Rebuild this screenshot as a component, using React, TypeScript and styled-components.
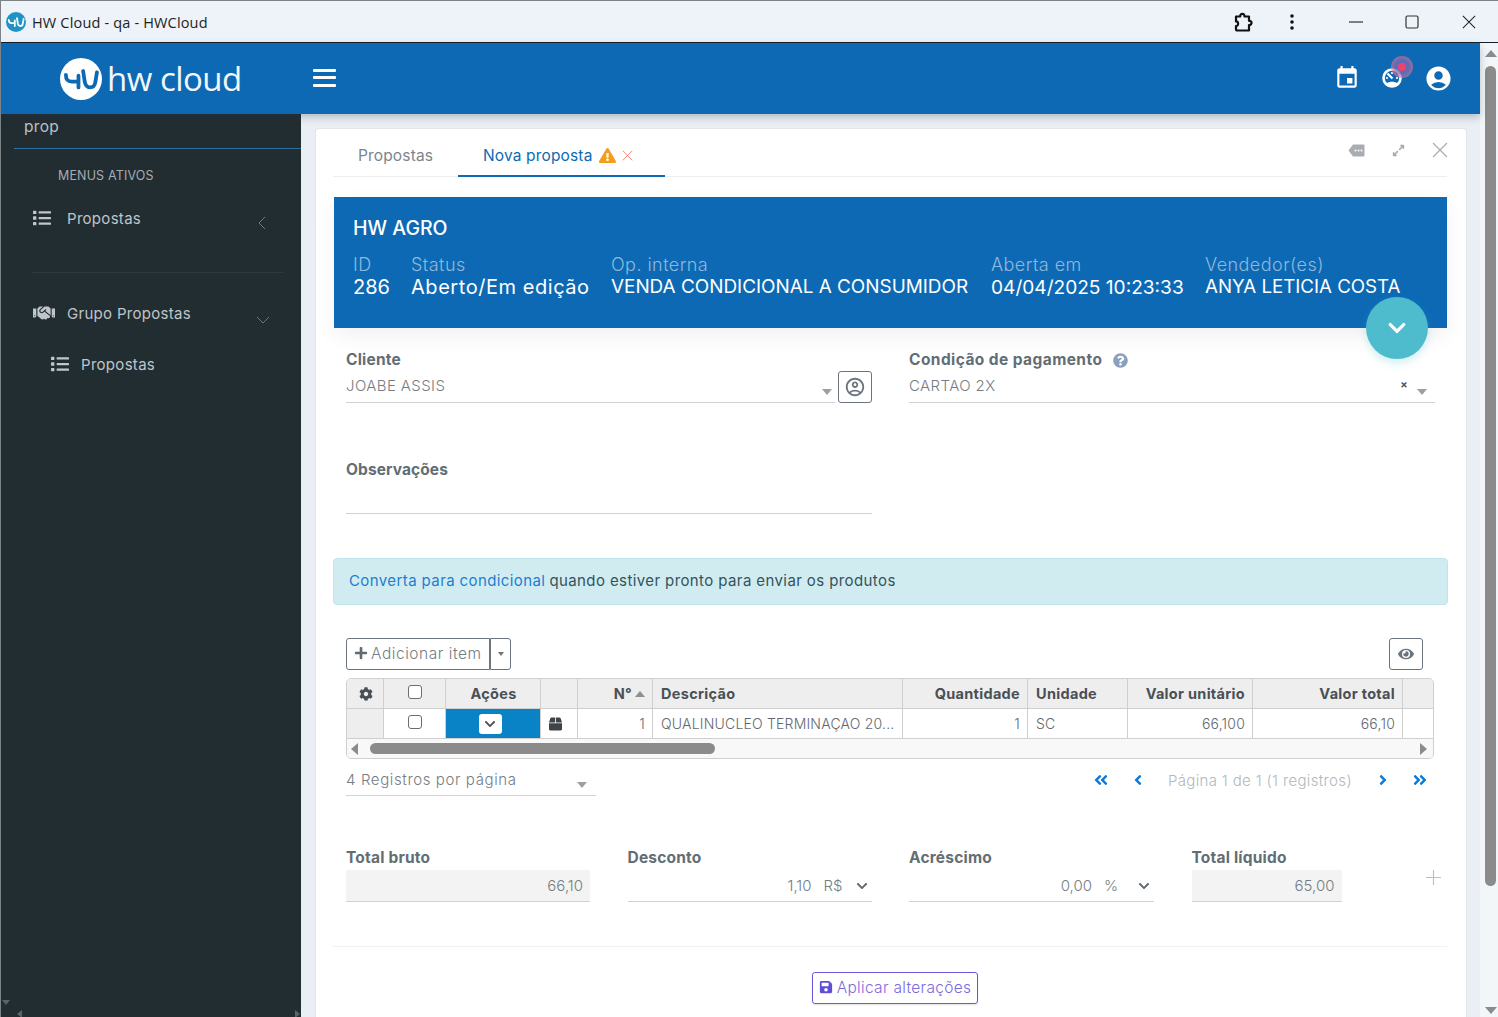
import React from 'react';
import styled, { createGlobalStyle } from 'styled-components';
import {
  FaAngleDoubleLeft,
  FaAngleDoubleRight,
  FaAngleLeft,
  FaAngleRight,
  FaBox,
  FaChevronDown,
  FaCog,
  FaExclamationTriangle,
  FaExpandAlt,
  FaEye,
  FaHandshake,
  FaList,
  FaPlus,
  FaQuestionCircle,
  FaSave,
} from 'react-icons/fa';
import { MdAccountCircle, MdOutlineAccountCircle, MdEvent } from 'react-icons/md';

const FONT = `Inter, "Open Sans", sans-serif`;

const GlobalStyle = createGlobalStyle`
  * { box-sizing: border-box; }
  html, body { margin: 0; padding: 0; height: 100%; overflow: hidden; }
  #root { height: 100%; }
  body { font-family: ${FONT}; color: #6c757d; background: #e9eff4; }
`;

const Window = styled.div`
  display: flex;
  flex-direction: column;
  height: 1017px;
  width: 1498px;
  border-left: 1px solid #7d8288;
  overflow: hidden;
  position: relative;
`;

const TitleBar = styled.div`
  display: flex;
  align-items: center;
  height: 43px;
  flex: none;
  background: #edf3f8;
  border-top: 1px solid #7d8288;
  border-bottom: 1px solid #14202b;
  padding-left: 5px;
  font-family: 'Open Sans', sans-serif;
  font-size: 14.5px;
  letter-spacing: 0.17px;
  color: #1d1d1d;
`;

const TitleText = styled.span`
  margin-left: 6px;
  flex: 1;
  margin-top: 2px;
`;

const TitleActions = styled.div`
  display: flex;
  align-items: center;
  color: #111;
`;

const TitleButton = styled.div<{ $w: number }>`
  width: ${(p) => p.$w}px;
  display: flex;
  justify-content: center;
  align-items: center;
`;

const Below = styled.div`
  display: flex;
  flex: 1;
  min-height: 0;
`;

const Main = styled.div`
  display: flex;
  flex-direction: column;
  flex: 1;
  min-width: 0;
`;

const PageScroll = styled.div`
  width: 18px;
  flex: none;
  background: #f3f6f9;
  display: flex;
  flex-direction: column;
  align-items: center;
  padding: 7px 0 0 3px;
`;

const ScrollThumb = styled.div`
  width: 11px;
  height: 820px;
  margin-top: 9px;
  margin-bottom: 121px;
  border-radius: 6px;
  background: #8b8b8b;
`;

const Tri = styled.div<{ $dir: 'up' | 'down' | 'left' | 'right'; $size?: number; $color?: string }>`
  flex: none;
  width: 0;
  height: 0;
  border-style: solid;
  border-color: transparent;
  ${({ $dir, $size = 5, $color = '#8b8b8b' }) => {
    if ($dir === 'up') return `border-width: 0 ${$size + 1}px ${$size + 2}px; border-bottom-color: ${$color};`;
    if ($dir === 'down') return `border-width: ${$size + 2}px ${$size + 1}px 0; border-top-color: ${$color};`;
    if ($dir === 'left') return `border-width: ${$size + 1}px ${$size + 2}px ${$size + 1}px 0; border-right-color: ${$color};`;
    return `border-width: ${$size + 1}px 0 ${$size + 1}px ${$size + 2}px; border-left-color: ${$color};`;
  }}
`;

const Header = styled.header`
  display: flex;
  align-items: center;
  height: 71px;
  flex: none;
  background: #0d69b4;
  position: relative;
  z-index: 3;
  box-shadow: 0 3px 8px rgba(40, 50, 60, 0.28);
`;

const LogoBlock = styled.div`
  width: 300px;
  padding-left: 59px;
  display: flex;
  align-items: center;
  gap: 5px;
  color: #fff;
`;

const LogoText = styled.span`
  font-family: 'Open Sans', sans-serif;
  font-weight: 400;
  font-size: 33px;
  letter-spacing: -0.5px;
  line-height: 1;
  margin-top: -1px;
  opacity: 0.95;
`;

const MenuBars = styled.div`
  display: flex;
  flex-direction: column;
  gap: 4.5px;
  margin: -2px 0 0 12px;
  width: 23px;
  & > i {
    display: block;
    height: 3px;
    background: #fff;
    border-radius: 1px;
  }
`;

const HeaderIcons = styled.div`
  margin: -1px 27px 0 auto;
  display: flex;
  align-items: center;
  gap: 19px;
  color: #fff;
`;

const GaugeWrap = styled.div`
  position: relative;
  width: 26px;
  height: 26px;
  display: flex;
  align-items: center;
  justify-content: center;
`;

const Pulse = styled.span`
  position: absolute;
  right: -8px;
  top: -9px;
  width: 22px;
  height: 22px;
  border-radius: 50%;
  background: radial-gradient(circle, rgba(120, 110, 180, 0.75) 0 45%, rgba(226, 110, 150, 0.6) 62% 100%);
  display: flex;
  align-items: center;
  justify-content: center;
  &::after {
    content: '';
    width: 8px;
    height: 8px;
    border-radius: 50%;
    background: #f0406c;
  }
`;

const Columns = styled.div`
  display: flex;
  flex: 1;
  min-height: 0;
`;

const Sidebar = styled.aside`
  width: 300px;
  flex: none;
  background: #222d32;
  color: #c2c7ca;
  position: relative;
  font-size: 15px;
  letter-spacing: 0.3px;
`;

const SearchBox = styled.div`
  margin-left: 13px;
  height: 35px;
  padding: 2px 0 0 10px;
  line-height: 22px;
  font-size: 15.5px;
  border-bottom: 1px solid #2f6f9f;
  color: #bcc2c5;
`;

const SectionLabel = styled.div`
  margin: 19px 0 0 57px;
  font-size: 12.5px;
  line-height: 16px;
  color: #a4acb0;
  letter-spacing: 0.15px;
`;

const MenuRow = styled.div<{ $indent?: number; $top: number }>`
  display: flex;
  align-items: center;
  height: 20px;
  margin-top: ${(p) => p.$top}px;
  padding-left: ${(p) => p.$indent ?? 32}px;
  color: #bfc5c8;
`;

const MenuLabel = styled.span<{ $left: number }>`
  margin-left: ${(p) => p.$left}px;
  flex: 1;
`;

const MenuArrow = styled.span<{ $right: number; $down?: number }>`
  margin-right: ${(p) => p.$right}px;
  display: flex;
  position: relative;
  top: ${(p) => p.$down ?? 0}px;
`;

const MenuDivider = styled.div`
  height: 1px;
  margin: 44px 18px 0 31px;
  background: #2e3a40;
`;

const SideScrollDown = styled.div`
  position: absolute;
  left: 1px;
  bottom: 12px;
`;

const SideScrollLeft = styled.div`
  position: absolute;
  left: 16px;
  bottom: -1px;
`;

const SideScrollRight = styled.div`
  position: absolute;
  right: 1px;
  bottom: -1px;
`;

const Content = styled.main`
  flex: 1;
  min-width: 0;
  padding: 14px 13px 0 14px;
  background: #e9eff4;
`;

const Card = styled.div`
  height: 100%;
  background: #fff;
  border: 1px solid #e2e6ea;
  border-bottom: 0;
  border-radius: 4px 4px 0 0;
  padding: 0 19px 0 17px;
  position: relative;
`;

const TabBar = styled.div`
  display: flex;
  align-items: flex-end;
  height: 48px;
  border-bottom: 1px solid #eceff1;
  font-size: 15.5px;
  letter-spacing: 0.15px;
`;

const Tab = styled.div<{ $active?: boolean; $w: number }>`
  width: ${(p) => p.$w}px;
  height: 100%;
  display: flex;
  align-items: center;
  padding: 6px 0 0 25px;
  gap: 6px;
  color: ${(p) => (p.$active ? '#0d6ab5' : '#7b858c')};
  border-bottom: 2px solid ${(p) => (p.$active ? '#0d6ab5' : 'transparent')};
  margin-bottom: -1px;
`;

const CardTools = styled.div`
  margin-left: auto;
  align-self: flex-start;
  display: flex;
  align-items: center;
  gap: 27px;
  height: 42px;
  margin-right: -1px;
  color: #a9adb1;
`;

const Banner = styled.section`
  margin: 20px 0 0 1px;
  height: 131px;
  background: #0d69b4;
  padding: 19px 0 0 19px;
  color: #fff;
  box-shadow: 0 8px 20px rgba(0, 0, 0, 0.06);
`;

const BannerTitle = styled.div`
  font-size: 19.5px;
  line-height: 24px;
  font-weight: 500;
`;

const BannerGrid = styled.div`
  display: grid;
  grid-template-columns: 58px 200px 380px 214px 1fr;
  margin-top: 13px;
`;

const BannerLabel = styled.div`
  font-size: 18px;
  line-height: 24px;
  letter-spacing: 0.45px;
  color: #8db9dd;
  font-weight: 300;
`;

const BannerValue = styled.div<{ $size?: number; $ls?: number }>`
  font-size: ${(p) => p.$size ?? 18.9}px;
  line-height: 24px;
  margin-top: -2px;
  font-weight: 400;
  white-space: nowrap;
  letter-spacing: ${(p) => p.$ls ?? 0}px;
`;

const Fab = styled.div`
  position: absolute;
  left: 1050px;
  top: 168px;
  width: 62px;
  height: 62px;
  border-radius: 50%;
  background: #4ebccd;
  color: #fff;
  display: flex;
  align-items: center;
  justify-content: center;
  box-shadow: 0 4px 8px rgba(78, 188, 205, 0.25);
`;

const Form = styled.div`
  padding: 0 13px 0 13px;
`;

const TwoCols = styled.div`
  display: grid;
  grid-template-columns: 526px 526px;
  gap: 37px;
`;

const FieldLabel = styled.div<{ $ls?: number }>`
  display: flex;
  align-items: center;
  gap: 11px;
  font-size: 15.5px;
  line-height: 20px;
  font-weight: 700;
  letter-spacing: ${(p) => p.$ls ?? 0.2}px;
  color: #636d74;
`;

const FieldRow = styled.div`
  display: flex;
  gap: 3px;
  margin-top: 1px;
`;

const SelectLine = styled.div`
  flex: 1;
  height: 32px;
  display: flex;
  align-items: center;
  padding-bottom: 2px;
  border-bottom: 1px solid #cfd3d6;
  font-size: 15px;
  letter-spacing: 0.4px;
  color: #747d84;
  font-weight: 300;
`;

const SelectText = styled.span`
  flex: 1;
`;

const SmallX = styled.span`
  font-size: 11px;
  font-weight: 700;
  color: #555;
  margin: -3px 9px 0 0;
`;

const TriWrap = styled.span<{ $right?: number; $top?: number }>`
  display: flex;
  margin: ${(p) => p.$top ?? 12}px ${(p) => p.$right ?? 3}px 0 0;
`;

const IconButton = styled.div`
  width: 34px;
  height: 32px;
  display: flex;
  align-items: center;
  justify-content: center;
  border: 1px solid #6c757d;
  border-radius: 3px;
  color: #6c757d;
  background: #fff;
`;

const SectionOne = styled.div`
  margin-top: 22px;
`;

const ObsField = styled.div`
  margin-top: 57px;
  width: 526px;
`;

const ObsLine = styled.div`
  height: 34px;
  border-bottom: 1px solid #cfd3d6;
`;

const Alert = styled.div`
  margin-top: 44px;
  height: 47px;
  margin-right: -1px;
  display: flex;
  align-items: center;
  padding: 0 0 2px 15px;
  background: #d1ecf1;
  border: 1px solid #bee5eb;
  border-radius: 4px;
  font-size: 15px;
  letter-spacing: 0.4px;
  color: #33535c;
`;

const AlertLink = styled.span`
  color: #1b7fd0;
  margin-right: 4px;
`;

const Toolbar = styled.div`
  display: flex;
  align-items: stretch;
  height: 32px;
  margin-top: 33px;
`;

const AddButton = styled.div`
  width: 144px;
  display: flex;
  align-items: center;
  gap: 3px;
  padding: 0 0 2px 7px;
  border: 1px solid #6c757d;
  border-radius: 3px 0 0 3px;
  font-size: 15.5px;
  letter-spacing: 0.55px;
  color: #747d84;
  font-weight: 300;
  & svg {
    color: #5f6a72;
  }
`;

const CaretButton = styled.div`
  width: 21px;
  display: flex;
  align-items: center;
  justify-content: center;
  border: 1px solid #6c757d;
  border-radius: 0 3px 3px 0;
`;

const EyeButton = styled(IconButton)`
  margin-left: auto;
  margin-right: 11px;
`;

const Table = styled.div`
  margin-top: 8px;
  border: 1px solid #cfcfcf;
  border-radius: 5px;
  overflow: hidden;
  height: 81px;
`;

const GridRow = styled.div<{ $head?: boolean }>`
  display: grid;
  grid-template-columns: 37px 62px 95px 37px 75px 250px 125px 100px 125px 150px 1fr;
  height: 30px;
  border-bottom: 1px solid #cfcfcf;
  background: ${(p) => (p.$head ? '#eeeeee' : '#fff')};
  font-size: ${(p) => (p.$head ? '14.5px' : '14px')};
  font-weight: ${(p) => (p.$head ? 700 : 300)};
  letter-spacing: ${(p) => (p.$head ? '0.3px' : '0.2px')};
  color: ${(p) => (p.$head ? '#4a5056' : '#62696f')};
`;

const Cell = styled.div<{ $align?: 'left' | 'right' | 'center'; $bg?: string; $pr?: number }>`
  display: flex;
  align-items: center;
  justify-content: ${(p) => (p.$align === 'right' ? 'flex-end' : p.$align === 'center' ? 'center' : 'flex-start')};
  padding: 0 ${(p) => p.$pr ?? 7}px 0 8px;
  border-right: 1px solid #cfcfcf;
  white-space: nowrap;
  overflow: hidden;
  gap: 3px;
  background: ${(p) => p.$bg ?? 'transparent'};
  &:last-child {
    border-right: 0;
  }
`;

const Check = styled.span`
  width: 14px;
  height: 14px;
  border: 1px solid #6d6d6d;
  border-radius: 3px;
  background: #fff;
  margin-top: -4px;
`;

const RowAction = styled.div`
  width: 23px;
  height: 20px;
  background: #fff;
  border-radius: 3px;
  display: flex;
  align-items: center;
  justify-content: center;
  color: #555;
`;

const TableScroll = styled.div`
  display: flex;
  align-items: center;
  height: 19px;
  background: #f8f8f8;
  padding: 0 6px 0 4px;
`;

const TableThumb = styled.div`
  width: 345px;
  height: 11px;
  margin-left: 12px;
  border-radius: 6px;
  background: #8b8b8b;
`;

const PushRight = styled.div`
  margin-left: auto;
`;

const PagerRow = styled.div`
  display: flex;
  align-items: center;
  margin-top: 5px;
  height: 32px;
`;

const PageSize = styled.div`
  width: 250px;
  height: 32px;
  display: flex;
  align-items: center;
  border-bottom: 1px solid #cfd3d6;
  font-size: 15px;
  letter-spacing: 0.62px;
  font-weight: 300;
  color: #747d84;
`;

const Pager = styled.div`
  margin-left: auto;
  margin-right: 6px;
  display: flex;
  align-items: center;
  color: #0d7bdb;
  font-size: 15px;
`;

const PagerInfo = styled.span`
  color: #b3b8bc;
  font-weight: 300;
  letter-spacing: 0.35px;
  margin: 0 23px 0 22px;
`;

const PagerIcon = styled.span<{ $gap?: number }>`
  display: flex;
  margin-right: ${(p) => p.$gap ?? 0}px;
`;

const Totals = styled.div`
  display: grid;
  grid-template-columns: 244px 244px 245px 150px 1fr;
  gap: 37.5px;
  margin-top: 52px;
`;

const TotalField = styled.div<{ $readonly?: boolean }>`
  height: 32px;
  margin-top: 2px;
  display: flex;
  align-items: center;
  justify-content: flex-end;
  padding-right: ${(p) => (p.$readonly ? 7 : 4)}px;
  border-bottom: 1px solid #cfd3d6;
  background: ${(p) => (p.$readonly ? '#f3f3f3' : 'transparent')};
  font-size: 15px;
  font-weight: 300;
  color: #747d84;
`;

const Unit = styled.span<{ $w?: number }>`
  width: ${(p) => p.$w ?? 32}px;
  margin-left: 12px;
`;

const PlusCell = styled.div`
  display: flex;
  justify-content: flex-end;
  align-items: flex-start;
  padding-top: 22px;
  margin-right: -7px;
`;

const CardDivider = styled.div`
  height: 1px;
  margin-top: 44px;
  background: #eff1f2;
`;

const ApplyRow = styled.div`
  display: flex;
  justify-content: center;
  margin-top: 25px;
  padding-left: 10px;
`;

const ApplyButton = styled.div`
  width: 166px;
  height: 32px;
  display: flex;
  align-items: center;
  justify-content: center;
  gap: 4px;
  padding-bottom: 2px;
  border: 1px solid #6a58d8;
  border-radius: 3px;
  color: #7a6be0;
  font-size: 15.5px;
  letter-spacing: 0.3px;
  font-weight: 300;
  box-shadow: 0 1px 2px rgba(0, 0, 0, 0.12);
  & svg {
    color: #5f4fd6;
  }
`;

const Mark = ({ size, bg, fg }: { size: number; bg: string; fg: string }) => (
  <svg width={size} height={size} viewBox="0 0 100 100">
    <circle cx="50" cy="50" r="50" fill={bg} />
    <path
      d="M14 40C14 52 18 56 28 56L44 56M44 42L44 70M55 31L59 57C61 67 65 70 71 70C78 70 83 66 84 58L88 34"
      fill="none"
      stroke={fg}
      strokeWidth="9"
      strokeLinecap="round"
      strokeLinejoin="round"
    />
  </svg>
);

const PuzzleIcon = () => (
  <svg width="22" height="22" viewBox="0 0 22 22" fill="none" stroke="#111" strokeWidth="2.2" strokeLinejoin="round">
    <path d="M3 5.5h4.2c-.3-3.6 4.6-3.6 4.3 0H16v4.3c3.4-.3 3.4 4.4 0 4.2V19.5H4.2c-.7 0-1.2-.5-1.2-1.2V15c2.8.3 2.8-5 0-4.7z" />
  </svg>
);

const GaugeIcon = () => (
  <svg width="20" height="20" viewBox="0 0 20 20">
    <circle cx="10" cy="10" r="8.5" fill="none" stroke="#fff" strokeWidth="2.6" />
    <circle cx="5" cy="10" r="1.1" fill="#fff" />
    <circle cx="10" cy="5" r="1.1" fill="#fff" />
    <circle cx="15" cy="10" r="1.1" fill="#fff" />
    <path d="M5.5 5.5L10.5 10.5" stroke="#fff" strokeWidth="2.2" />
    <path d="M4 15.5c3.5-2.2 8.5-2.2 12 0l-2 3h-8z" fill="#fff" />
  </svg>
);

const TagIcon = () => (
  <svg width="17" height="13" viewBox="0 0 17 13">
    <path d="M5 0.5h10.5a1 1 0 0 1 1 1v10a1 1 0 0 1-1 1H5L0.5 6.5z" fill="#a9adb1" />
    <circle cx="7.5" cy="6.5" r="1" fill="#fff" />
    <circle cx="10.5" cy="6.5" r="1" fill="#fff" />
    <circle cx="13.5" cy="6.5" r="1" fill="#fff" />
  </svg>
);

const ThinCross = ({ size, color, width }: { size: number; color: string; width: number }) => (
  <svg width={size} height={size} viewBox="0 0 16 16">
    <path d="M1 1l14 14M15 1L1 15" stroke={color} strokeWidth={width} />
  </svg>
);

export default function App() {
  return (
    <>
      <GlobalStyle />
      <Window>
        <TitleBar>
          <Mark size={20} bg="#1f93c4" fg="#fff" />
          <TitleText>HW Cloud - qa - HWCloud</TitleText>
          <TitleActions>
            <TitleButton $w={26}>
              <PuzzleIcon />
            </TitleButton>
            <TitleButton $w={70}>
              <svg width="4" height="16" viewBox="0 0 4 16" fill="#111">
                <circle cx="2" cy="2" r="1.8" />
                <circle cx="2" cy="8" r="1.8" />
                <circle cx="2" cy="14" r="1.8" />
              </svg>
            </TitleButton>
            <TitleButton $w={57}>
              <svg width="14" height="2" viewBox="0 0 14 2">
                <path d="M0 1h14" stroke="#222" strokeWidth="1.1" />
              </svg>
            </TitleButton>
            <TitleButton $w={56}>
              <svg width="14" height="14" viewBox="0 0 14 14" fill="none">
                <rect x="1" y="1" width="12" height="12" rx="1.5" stroke="#333" strokeWidth="1.2" />
              </svg>
            </TitleButton>
            <TitleButton $w={58}>
              <ThinCross size={14} color="#222" width={1.2} />
            </TitleButton>
          </TitleActions>
        </TitleBar>

        <Below>
          <Main>
            <Header>
              <LogoBlock>
                <Mark size={42} bg="#fff" fg="#0d69b4" />
                <LogoText>hw cloud</LogoText>
              </LogoBlock>
              <MenuBars>
                <i />
                <i />
                <i />
              </MenuBars>
              <HeaderIcons>
                <MdEvent size={26} />
                <GaugeWrap>
                  <GaugeIcon />
                  <Pulse />
                </GaugeWrap>
                <MdAccountCircle size={29} />
              </HeaderIcons>
            </Header>

            <Columns>
              <Sidebar>
                <SearchBox>prop</SearchBox>
                <SectionLabel>MENUS ATIVOS</SectionLabel>
                <MenuRow $top={24}>
                  <FaList size={18} />
                  <MenuLabel $left={16}>Propostas</MenuLabel>
                  <MenuArrow $right={35} $down={5}>
                    <svg width="8" height="14" viewBox="0 0 8 14" fill="none" stroke="#6d787d">
                      <path d="M7 1L1 7l6 6" />
                    </svg>
                  </MenuArrow>
                </MenuRow>
                <MenuDivider />
                <MenuRow $top={30}>
                  <FaHandshake size={22} />
                  <MenuLabel $left={12}>Grupo Propostas</MenuLabel>
                  <MenuArrow $right={31} $down={7}>
                    <svg width="14" height="8" viewBox="0 0 14 8" fill="none" stroke="#6d787d">
                      <path d="M1 1l6 6 6-6" />
                    </svg>
                  </MenuArrow>
                </MenuRow>
                <MenuRow $top={31} $indent={50}>
                  <FaList size={18} />
                  <MenuLabel $left={12}>Propostas</MenuLabel>
                </MenuRow>
                <SideScrollDown>
                  <Tri $dir="down" $color="#59636a" $size={3} />
                </SideScrollDown>
                <SideScrollLeft>
                  <Tri $dir="left" $color="#59636a" $size={3} />
                </SideScrollLeft>
                <SideScrollRight>
                  <Tri $dir="right" $color="#59636a" $size={3} />
                </SideScrollRight>
              </Sidebar>

              <Content>
                <Card>
                  <TabBar>
                    <Tab $w={125}>Propostas</Tab>
                    <Tab $w={207} $active>
                      Nova proposta
                      <FaExclamationTriangle size={17} color="#f59c1a" />
                      <ThinCross size={11} color="#f0917d" width={1.4} />
                    </Tab>
                    <CardTools>
                      <TagIcon />
                      <FaExpandAlt size={13} />
                      <ThinCross size={16} color="#a9adb1" width={1.2} />
                    </CardTools>
                  </TabBar>

                  <Banner>
                    <BannerTitle>HW AGRO</BannerTitle>
                    <BannerGrid>
                      <div>
                        <BannerLabel>ID</BannerLabel>
                        <BannerValue $size={20}>286</BannerValue>
                      </div>
                      <div>
                        <BannerLabel>Status</BannerLabel>
                        <BannerValue $size={20} $ls={0.55}>
                          Aberto/Em edição
                        </BannerValue>
                      </div>
                      <div>
                        <BannerLabel>Op. interna</BannerLabel>
                        <BannerValue>VENDA CONDICIONAL A CONSUMIDOR</BannerValue>
                      </div>
                      <div>
                        <BannerLabel>Aberta em</BannerLabel>
                        <BannerValue $size={19.1}>04/04/2025 10:23:33</BannerValue>
                      </div>
                      <div>
                        <BannerLabel>Vendedor(es)</BannerLabel>
                        <BannerValue $size={18.7}>ANYA LETICIA COSTA</BannerValue>
                      </div>
                    </BannerGrid>
                  </Banner>
                  <Fab>
                    <FaChevronDown size={20} />
                  </Fab>

                  <Form>
                    <SectionOne>
                      <TwoCols>
                        <div>
                          <FieldLabel>Cliente</FieldLabel>
                          <FieldRow>
                            <SelectLine>
                              <SelectText>JOABE ASSIS</SelectText>
                              <TriWrap $right={3}>
                                <Tri $dir="down" $size={4} $color="#9aa0a5" />
                              </TriWrap>
                            </SelectLine>
                            <IconButton>
                              <MdOutlineAccountCircle size={22} />
                            </IconButton>
                          </FieldRow>
                        </div>
                        <div>
                          <FieldLabel $ls={0.42}>
                            Condição de pagamento
                            <FaQuestionCircle size={15} color="#8aa0bd" />
                          </FieldLabel>
                          <FieldRow>
                            <SelectLine>
                              <SelectText>CARTAO 2X</SelectText>
                              <SmallX>×</SmallX>
                              <TriWrap $right={8}>
                                <Tri $dir="down" $size={4} $color="#9aa0a5" />
                              </TriWrap>
                            </SelectLine>
                          </FieldRow>
                        </div>
                      </TwoCols>
                    </SectionOne>

                    <ObsField>
                      <FieldLabel $ls={0.1}>Observações</FieldLabel>
                      <ObsLine />
                    </ObsField>
                  </Form>

                  <Alert>
                    <AlertLink>Converta para condicional</AlertLink>
                    quando estiver pronto para enviar os produtos
                  </Alert>

                  <Form>
                    <Toolbar>
                      <AddButton>
                        <FaPlus size={14} />
                        Adicionar item
                      </AddButton>
                      <CaretButton>
                        <Tri $dir="down" $size={2} $color="#6c757d" />
                      </CaretButton>
                      <EyeButton>
                        <FaEye size={16} />
                      </EyeButton>
                    </Toolbar>

                    <Table>
                      <GridRow $head>
                        <Cell $align="center">
                          <FaCog size={14} />
                        </Cell>
                        <Cell $align="center">
                          <Check />
                        </Cell>
                        <Cell $align="center">Ações</Cell>
                        <Cell />
                        <Cell $align="right">
                          N°
                          <Tri $dir="up" $size={4} $color="#8a8f94" />
                        </Cell>
                        <Cell>Descrição</Cell>
                        <Cell $align="right">Quantidade</Cell>
                        <Cell>Unidade</Cell>
                        <Cell $align="right">Valor unitário</Cell>
                        <Cell $align="right">Valor total</Cell>
                        <Cell />
                      </GridRow>
                      <GridRow>
                        <Cell $bg="#eeeeee" />
                        <Cell $align="center">
                          <Check />
                        </Cell>
                        <Cell $align="center" $bg="#0a82c6" $pr={14}>
                          <RowAction>
                            <FaChevronDown size={12} />
                          </RowAction>
                        </Cell>
                        <Cell $align="center" $pr={15}>
                          <FaBox size={14} color="#3f4448" />
                        </Cell>
                        <Cell $align="right">1</Cell>
                        <Cell>QUALINUCLEO TERMINAÇAO 20...</Cell>
                        <Cell $align="right">1</Cell>
                        <Cell>SC</Cell>
                        <Cell $align="right">66,100</Cell>
                        <Cell $align="right">66,10</Cell>
                        <Cell />
                      </GridRow>
                      <TableScroll>
                        <Tri $dir="left" />
                        <TableThumb />
                        <PushRight>
                          <Tri $dir="right" />
                        </PushRight>
                      </TableScroll>
                    </Table>

                    <PagerRow>
                      <PageSize>
                        <SelectText>4 Registros por página</SelectText>
                        <TriWrap $right={9} $top={10}>
                          <Tri $dir="down" $size={4} $color="#9aa0a5" />
                        </TriWrap>
                      </PageSize>
                      <Pager>
                        <PagerIcon $gap={21}>
                          <FaAngleDoubleLeft size={16} />
                        </PagerIcon>
                        <PagerIcon>
                          <FaAngleLeft size={16} />
                        </PagerIcon>
                        <PagerInfo>Página 1 de 1 (1 registros)</PagerInfo>
                        <PagerIcon $gap={21}>
                          <FaAngleRight size={16} />
                        </PagerIcon>
                        <PagerIcon>
                          <FaAngleDoubleRight size={16} />
                        </PagerIcon>
                      </Pager>
                    </PagerRow>

                    <Totals>
                      <div>
                        <FieldLabel>Total bruto</FieldLabel>
                        <TotalField $readonly>66,10</TotalField>
                      </div>
                      <div>
                        <FieldLabel>Desconto</FieldLabel>
                        <TotalField>
                          1,10
                          <Unit>R$</Unit>
                          <FaChevronDown size={12} color="#5f6a72" />
                        </TotalField>
                      </div>
                      <div>
                        <FieldLabel>Acréscimo</FieldLabel>
                        <TotalField>
                          0,00
                          <Unit $w={34}>%</Unit>
                          <FaChevronDown size={12} color="#5f6a72" />
                        </TotalField>
                      </div>
                      <div>
                        <FieldLabel>Total líquido</FieldLabel>
                        <TotalField $readonly>65,00</TotalField>
                      </div>
                      <PlusCell>
                        <svg width="15" height="15" viewBox="0 0 15 15">
                          <path d="M7.5 0v15M0 7.5h15" stroke="#bcc0c4" strokeWidth="1.2" />
                        </svg>
                      </PlusCell>
                    </Totals>
                  </Form>

                  <CardDivider />
                  <ApplyRow>
                    <ApplyButton>
                      <FaSave size={14} />
                      Aplicar alterações
                    </ApplyButton>
                  </ApplyRow>
                </Card>
              </Content>
            </Columns>
          </Main>
          <PageScroll>
            <Tri $dir="up" />
            <ScrollThumb />
            <Tri $dir="down" />
          </PageScroll>
        </Below>
      </Window>
    </>
  );
}
